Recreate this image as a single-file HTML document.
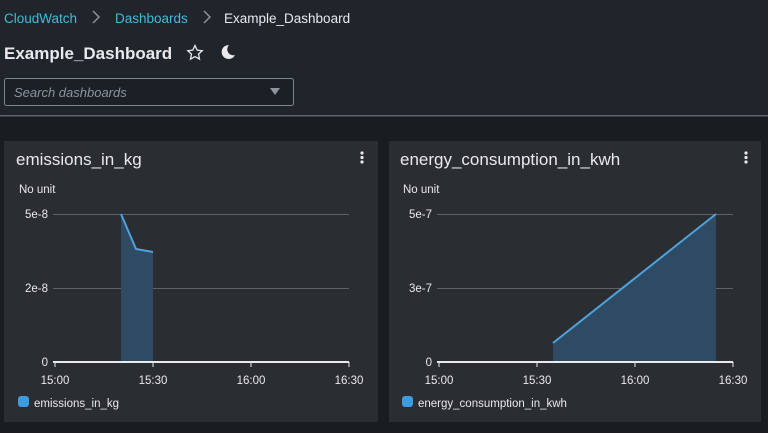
<!DOCTYPE html>
<html><head><meta charset="utf-8"><style>
body{margin:0;width:768px;height:428px;overflow:hidden;background:#191c21;font-family:"Liberation Sans",sans-serif}
</style></head><body>
<svg width="768" height="428" xmlns="http://www.w3.org/2000/svg" font-family="Liberation Sans, sans-serif">
<rect x="0" y="0" width="768" height="116" fill="#20252c"/>
<rect x="0" y="115" width="768" height="1.5" fill="#5b626b"/>
<text x="4" y="23" font-size="13.5" fill="#44b9d6">CloudWatch</text>
<path d="M93 11l6 6-6 6" stroke="#8d9196" stroke-width="1.5" fill="none"/>
<text x="115" y="23" font-size="13.5" fill="#44b9d6">Dashboards</text>
<path d="M204 11l6 6-6 6" stroke="#8d9196" stroke-width="1.5" fill="none"/>
<text x="224" y="23" font-size="13.5" fill="#e8eaec">Example_Dashboard</text>
<text x="4" y="59" font-size="17" font-weight="bold" fill="#e8eaec">Example_Dashboard</text>
<path d="M195 45.5l2.2 4.6 5 .6-3.7 3.4 1 5-4.5-2.5-4.5 2.5 1-5-3.7-3.4 5-.6z" stroke="#e8eaec" stroke-width="1.3" fill="none"/>
<path d="M229 45a7 7 0 1 0 6 10a6 6 0 0 1-6-10z" fill="#e8eaec"/>
<rect x="4.5" y="78.5" width="289" height="27" rx="2" fill="#1b2027" stroke="#7d848c"/>
<text x="14" y="97" font-size="13" font-style="italic" fill="#8d949c">Search dashboards</text>
<path d="M270 88h10l-5 7z" fill="#8d949c"/>
<!-- cards -->
<rect x="4" y="141" width="374" height="281" fill="#2a2d32"/>
<rect x="389" y="141" width="372" height="281" fill="#2a2d32"/>
<g fill="#e8eaec"><circle cx="362" cy="153" r="1.6"/><circle cx="362" cy="157.5" r="1.6"/><circle cx="362" cy="162" r="1.6"/>
<circle cx="746" cy="153" r="1.6"/><circle cx="746" cy="157.5" r="1.6"/><circle cx="746" cy="162" r="1.6"/></g>
<text x="16" y="165" font-size="17" fill="#e8eaec">emissions_in_kg</text>
<text x="400" y="165" font-size="17" fill="#e8eaec">energy_consumption_in_kwh</text>
<g font-size="11.5" fill="#e8eaec">
<text x="19" y="193">No unit</text><text x="403" y="193">No unit</text>
<text x="48" y="218" text-anchor="end">5e-8</text><text x="48" y="292" text-anchor="end">2e-8</text><text x="48" y="366" text-anchor="end">0</text>
<text x="432" y="218" text-anchor="end">5e-7</text><text x="432" y="292" text-anchor="end">3e-7</text><text x="432" y="366" text-anchor="end">0</text>
<text x="55" y="384" text-anchor="middle">15:00</text><text x="153" y="384" text-anchor="middle">15:30</text><text x="251" y="384" text-anchor="middle">16:00</text><text x="349" y="384" text-anchor="middle">16:30</text>
<text x="439" y="384" text-anchor="middle">15:00</text><text x="537" y="384" text-anchor="middle">15:30</text><text x="635" y="384" text-anchor="middle">16:00</text><text x="733" y="384" text-anchor="middle">16:30</text>
<text x="34" y="407">emissions_in_kg</text><text x="418" y="407">energy_consumption_in_kwh</text>
</g>
<g stroke="#5e6166" stroke-width="1"><path d="M53 214.5h296M53 288.5h296M437 214.5h296M437 288.5h296"/></g>
<path d="M121 214L136 249L153 252V362H121Z" fill="#2f4b63"/>
<path d="M121 214L136 249L153 252" stroke="#4ea2dc" stroke-width="2" fill="none"/>
<path d="M553 343L716 214V362H553Z" fill="#2f4b63"/>
<path d="M553 343L716 214" stroke="#4ea2dc" stroke-width="2" fill="none"/>
<g stroke="#e8eaec" stroke-width="2"><path d="M53 362h296M437 362h296"/></g>
<g stroke="#e8eaec" stroke-width="1"><path d="M55 362v5M153 362v5M251 362v5M349 362v5M439 362v5M537 362v5M635 362v5M733 362v5"/></g>
<rect x="18" y="396" width="11" height="11" rx="3" fill="#3d9be0"/>
<rect x="402" y="396" width="11" height="11" rx="3" fill="#3d9be0"/>
</svg>
</body></html>
